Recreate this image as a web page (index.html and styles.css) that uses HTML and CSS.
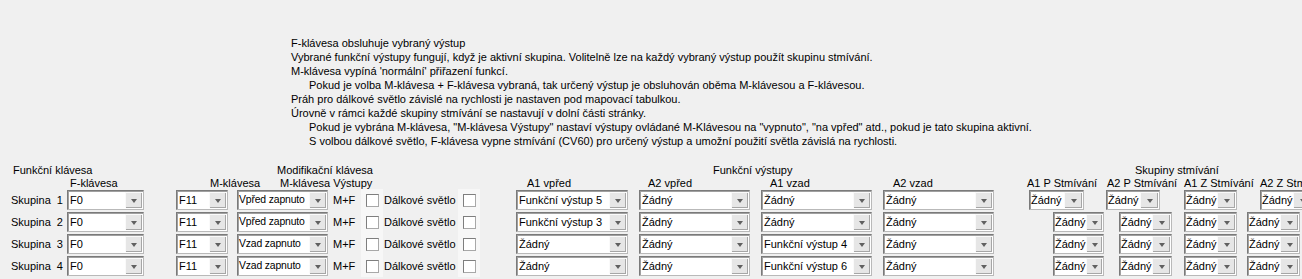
FILE: index.html
```html
<!DOCTYPE html>
<html lang="cs">
<head>
  <meta charset="UTF-8">
  <title>Funkční klávesy</title>
  <link rel="stylesheet" href="styles.css">
</head>
<body>
  <div class="help">
    <div>F-klávesa obsluhuje vybraný výstup</div>
    <div>Vybrané funkční výstupy fungují, když je aktivní skupina. Volitelně lze na každý vybraný výstup použít skupinu stmívání.</div>
    <div>M-klávesa vypíná 'normální' přiřazení funkcí.</div>
    <div class="ind">Pokud je volba M-klávesa + F-klávesa vybraná, tak určený výstup je obsluhován oběma M-klávesou a F-klávesou.</div>
    <div>Práh pro dálkové světlo závislé na rychlosti je nastaven pod mapovací tabulkou.</div>
    <div>Úrovně v rámci každé skupiny stmívání se nastavují v dolní části stránky.</div>
    <div class="ind">Pokud je vybrána M-klávesa, "M-klávesa Výstupy" nastaví výstupy ovládané M-Klávesou na "vypnuto", "na vpřed" atd., pokud je tato skupina aktivní.</div>
    <div class="ind">S volbou dálkové světlo, F-klávesa vypne stmívání (CV60) pro určený výstup a umožní použití světla závislá na rychlosti.</div>
  </div>

  <div class="head head1">
    <span class="h-fk">Funkční klávesa</span>
    <span class="h-mk">Modifikační klávesa</span>
    <span class="h-fv">Funkční výstupy</span>
    <span>Skupiny stmívání</span>
  </div>
  <div class="head head2">
    <span class="w140">F-klávesa</span>
    <span class="w70">M-klávesa</span>
    <span class="w247">M-klávesa Výstupy</span>
    <span class="w121">A1 vpřed</span>
    <span class="w122">A2 vpřed</span>
    <span class="w123">A1 vzad</span>
    <span class="w134">A2 vzad</span>
    <span class="w80">A1 P Stmívání</span>
    <span class="w77">A2 P Stmívání</span>
    <span class="w76">A1 Z Stmívání</span>
    <span>A2 Z Stmívání</span>
  </div>

  <div id="rows"></div>

  <script>
    // data pro skupiny
    var groups = [
      { mOut: 'Vpřed zapnuto', a1f: 'Funkční výstup 5', a2f: 'Žádný', a1z: 'Žádný', a2z: 'Žádný' },
      { mOut: 'Vpřed zapnuto', a1f: 'Funkční výstup 3', a2f: 'Žádný', a1z: 'Žádný', a2z: 'Žádný' },
      { mOut: 'Vzad zapnuto', a1f: 'Žádný', a2f: 'Žádný', a1z: 'Funkční výstup 4', a2z: 'Žádný' },
      { mOut: 'Vzad zapnuto', a1f: 'Žádný', a2f: 'Žádný', a1z: 'Funkční výstup 6', a2z: 'Žádný' }
    ];

    function combo(cls, text) {
      return '<div class="combo ' + cls + '"><span class="val">' + text + '</span><span class="btn"><i></i></span></div>';
    }

    var html = '';
    groups.forEach(function(g, i) {
      html += '<div class="row' + (i === 0 ? ' first' : '') + '">' +
        '<span class="lbl">Skupina&nbsp;&nbsp;' + (i + 1) + '</span>' +
        combo('c-f', 'F0') +
        combo('c-m', 'F11') +
        combo('c-mo', g.mOut) +
        '<span class="mf">M+F</span>' +
        '<span class="chk-wrap"><span class="chk"></span></span>' +
        '<span class="dal">Dálkové světlo</span>' +
        '<span class="chk-wrap"><span class="chk"></span></span>' +
        combo('c-out c-a1f', g.a1f) +
        combo('c-out', g.a2f) +
        combo('c-out', g.a1z) +
        combo('c-out', g.a2z) +
        combo('c-dim d1', 'Žádný') +
        combo('c-dim d2', 'Žádný') +
        combo('c-dim d3', 'Žádný') +
        combo('c-dim d4', 'Žádný') +
        '</div>';
    });
    document.getElementById('rows').innerHTML = html;
  </script>
</body>
</html>
```

FILE: styles.css
```css
/* Okno nastavení funkčních kláves */
body {
  margin: 0;
  background: #f0f0f0;
  font-family: "Liberation Sans", Arial, sans-serif;
  font-size: 11px;
  color: #000;
  overflow: hidden;
  white-space: nowrap;
}
.help {
  padding: 36px 0 0 291px;
  line-height: 14px;
}
.help .ind {
  padding-left: 18px;
}

.head {
  display: flex;
}
.head span {
  flex: none;
}
.head1 {
  margin-top: 15px;
  height: 14px;
  line-height: 14px;
  padding-left: 13px;
}
.head2 {
  height: 12px;
  line-height: 12px;
  padding-left: 70px;
}
.h-fk { width: 264px; }
.h-mk { width: 436px; }
.h-fv { width: 422px; }
.w70 { width: 70px; }
.w76 { width: 76px; }
.w77 { width: 77px; }
.w80 { width: 80px; }
.w121 { width: 121px; }
.w122 { width: 122px; }
.w123 { width: 123px; }
.w134 { width: 134px; }
.w140 { width: 140px; }
.w247 { width: 247px; }

/* řádky skupin */
.row {
  display: flex;
  align-items: center;
  height: 22px;
}
.lbl {
  flex: none;
  width: 56px;
  padding-left: 11px;
}
.combo {
  flex: none;
  display: flex;
  height: 20px;
  box-sizing: border-box;
  background: #fff;
  border: 1px solid;
  border-color: #7a7a7a #b9b9b9 #b9b9b9 #7a7a7a;
  box-shadow: inset 1px 1px 0 #a0a0a0;
}
.combo .val {
  flex: 1;
  padding-left: 2px;
  line-height: 18px;
  overflow: hidden;
}
.combo .btn {
  flex: none;
  width: 16px;
  margin: 1px 1px 1px 0;
  background: #e6e6e6;
  border-left: 1px solid #fafafa;
  border-top: 1px solid #fafafa;
  box-shadow: inset -1px -1px 0 #a6a6a6;
  display: flex;
  align-items: center;
  justify-content: center;
}
.combo .btn i {
  width: 0;
  height: 0;
  border-left: 3px solid transparent;
  border-right: 3px solid transparent;
  border-top: 4px solid #606060;
  margin-top: 1px;
}
.c-f { width: 77px; }
.c-m { width: 52px; margin-left: 32px; }
.c-mo { width: 91px; margin-left: 9px; }
.c-mo .val {
  font-size: 10.4px;
  letter-spacing: -0.15px;
  padding-left: 1px;
}
.mf {
  flex: none;
  width: 28px;
  margin-left: 5px;
}
.chk-wrap {
  flex: none;
  width: 22px;
  height: 22px;
  background: #f7f7f7;
  display: flex;
  align-items: center;
  padding-left: 5px;
  box-sizing: border-box;
}
.chk {
  width: 13px;
  height: 13px;
  box-sizing: border-box;
  background: #fff;
  border: 1px solid;
  border-color: #7e7e7e #a8a8a8 #a8a8a8 #7e7e7e;
}
.dal {
  flex: none;
  width: 74px;
  padding-left: 1px;
}
.c-out { width: 111px; margin-left: 11px; }
.c-out.c-a1f { width: 112px; margin-left: 36px; }

.c-dim { width: 53px; }
.c-dim .val { padding-left: 1px; }
.c-dim .btn { width: 17px; }
.d1 { margin-left: 59px; width: 51px; }
.d1 .btn { width: 15px; }
.d2 { margin-left: 15px; }
.d3 { margin-left: 12px; }
.d4 { margin-left: 10px; }
.first .d1 { margin-left: 35px; width: 55px; }
.first .d1 .btn { width: 17px; }
.first .d2 { margin-left: 22px; width: 54px; }
.first .d3 { margin-left: 24px; }
.first .d4 { margin-left: 23px; }
```
